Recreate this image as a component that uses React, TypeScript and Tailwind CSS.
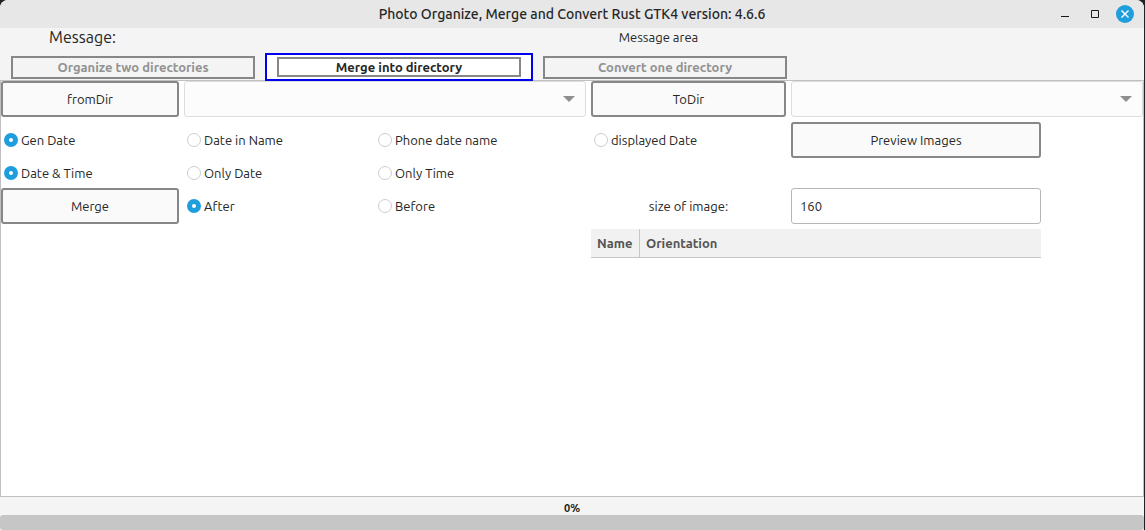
import { useState } from "react";
import type { ReactNode } from "react";

function PushButton({ children, className = "" }: { children: ReactNode; className?: string }) {
  return (
    <button
      type="button"
      className={`h-9 w-full rounded-[3px] border-2 border-[#878787] bg-[#fafafa] text-center ${className}`}
    >
      {children}
    </button>
  );
}

function Combo({ label, className = "" }: { label: string; className?: string }) {
  return (
    <div className={`relative h-9 ${className}`}>
      <select
        aria-label={label}
        className="h-full w-full appearance-none rounded-[3px] border border-[#dddddd] bg-[#fcfcfc] px-2"
      />
      <svg
        className="pointer-events-none absolute top-[15px] right-[11px]"
        width="12"
        height="6"
        viewBox="0 0 12 6"
        aria-hidden="true"
      >
        <path d="M0 0H12L6 6Z" fill="#8e8e8e" />
      </svg>
    </div>
  );
}

function Radio({
  name,
  label,
  value,
  onChange,
  className = "",
}: {
  name: string;
  label: string;
  value: string;
  onChange: (v: string) => void;
  className?: string;
}) {
  return (
    <label className={`flex items-center gap-[3px] pl-[3px] ${className}`}>
      <input
        type="radio"
        name={name}
        checked={value === label}
        onChange={() => onChange(label)}
        className="size-[14px] shrink-0 appearance-none rounded-full border border-[#cdcdcd] bg-white checked:border-[5px] checked:border-[#1f9ede]"
      />
      <span className="whitespace-nowrap">{label}</span>
    </label>
  );
}

const tabs = ["Organize two directories", "Merge into directory", "Convert one directory"];

export default function App() {
  const [tab, setTab] = useState(tabs[1]);
  const [source, setSource] = useState("Gen Date");
  const [format, setFormat] = useState("Date & Time");
  const [position, setPosition] = useState("After");
  const [size, setSize] = useState("160");

  return (
    <div className="min-h-screen bg-[#222222] pr-px font-['Ubuntu','Noto_Sans',sans-serif] text-[13px] leading-5 text-[#262626]">
      <div className="flex min-h-screen flex-col overflow-hidden rounded-t-lg bg-[#f4f4f4]">
        <header className="grid h-7 grid-cols-[1fr_auto_1fr] items-center bg-[#e7e7e7]">
          <h1 className="col-start-2 text-sm font-medium text-[#262626]">
            Photo Organize, Merge and Convert Rust GTK4 version: 4.6.6
          </h1>
          <div className="flex items-center justify-end gap-3 pr-[10px]">
            <button type="button" aria-label="Minimize" className="size-[18px]">
              <svg width="18" height="18" viewBox="0 0 18 18">
                <path d="M5 11.500H13" stroke="#1a1a1a" />
              </svg>
            </button>
            <button type="button" aria-label="Maximize" className="size-[18px]">
              <svg width="18" height="18" viewBox="0 0 18 18">
                <path d="M5.500 5.500H12.500V12.500H5.500Z" fill="none" stroke="#1a1a1a" />
              </svg>
            </button>
            <button type="button" aria-label="Close" className="size-[18px] rounded-full bg-[#1f9ede]">
              <svg width="18" height="18" viewBox="0 0 18 18">
                <path d="M5.500 5.500L12.500 12.500M12.500 5.500L5.500 12.500" stroke="#ffffff" strokeWidth="1.400" />
              </svg>
            </button>
          </div>
        </header>

        <div className="flex h-[18px] items-center gap-2">
          <span className="w-[165px] text-center text-base leading-5">Message:</span>
          <span className="flex-1 text-center">Message area</span>
        </div>

        <div role="tablist" className="flex h-[35px] items-end gap-[10px] border-b border-[#c0c0c0] pl-[11px]">
          {tabs.map((t) =>
            t === tab ? (
              <button
                key={t}
                type="button"
                role="tab"
                aria-selected="true"
                className="-mb-px h-7 border-2 border-[#0000f0] bg-white px-[10px] font-bold text-[#262626]"
                onClick={() => setTab(t)}
              >
                <span className="flex h-5 w-[244px] items-center justify-center border-2 border-[#878787]">{t}</span>
              </button>
            ) : (
              <button
                key={t}
                type="button"
                role="tab"
                aria-selected="false"
                className="mb-px flex h-[23px] w-[244px] items-start justify-center border-2 border-[#878787] font-bold leading-[18px] text-[#929292]"
                onClick={() => setTab(t)}
              >
                {t}
              </button>
            ),
          )}
        </div>

        <main className="flex-1 border-x border-b border-[#c0c0c0] bg-white">
          <div className="grid grid-cols-[178fr_186fr_211fr_195fr_250fr_97fr] items-center gap-[5px]">
            <PushButton>fromDir</PushButton>
            <Combo label="From directory" className="col-span-2" />
            <PushButton>ToDir</PushButton>
            <Combo label="To directory" className="col-span-2" />

            <Radio name="source" label="Gen Date" value={source} onChange={setSource} />
            <Radio name="source" label="Date in Name" value={source} onChange={setSource} />
            <Radio name="source" label="Phone date name" value={source} onChange={setSource} />
            <Radio name="source" label="displayed Date" value={source} onChange={setSource} />
            <PushButton>Preview Images</PushButton>

            <Radio name="format" label="Date & Time" value={format} onChange={setFormat} className="col-start-1" />
            <Radio name="format" label="Only Date" value={format} onChange={setFormat} />
            <Radio name="format" label="Only Time" value={format} onChange={setFormat} />

            <PushButton className="col-start-1">Merge</PushButton>
            <Radio name="position" label="After" value={position} onChange={setPosition} />
            <Radio name="position" label="Before" value={position} onChange={setPosition} />
            <label htmlFor="image-size" className="text-center">
              size of image:
            </label>
            <input
              id="image-size"
              type="text"
              value={size}
              onChange={(e) => setSize(e.target.value)}
              className="h-9 w-full rounded-[3px] border border-[#b6b6b6] bg-white px-2"
            />

            <table className="col-span-2 col-start-4 w-full border-separate border-spacing-0 text-left">
              <thead>
                <tr className="h-[29px] bg-[#f1f1f1] text-[#555555]">
                  <th className="w-[49px] border-r border-b border-[#c6c6c6] px-[6px] font-bold">Name</th>
                  <th className="border-b border-[#c6c6c6] px-[6px] font-bold">Orientation</th>
                </tr>
              </thead>
            </table>
          </div>
        </main>

        <footer>
          <div className="flex h-[18px] items-center justify-center pt-1 text-[11px] font-bold text-[#1a1a1a]">0%</div>
          <div
            role="progressbar"
            aria-label="Progress"
            aria-valuenow={0}
            className="h-[15px] rounded-[3px] bg-[#c6c6c6]"
          />
        </footer>
      </div>
    </div>
  );
}
